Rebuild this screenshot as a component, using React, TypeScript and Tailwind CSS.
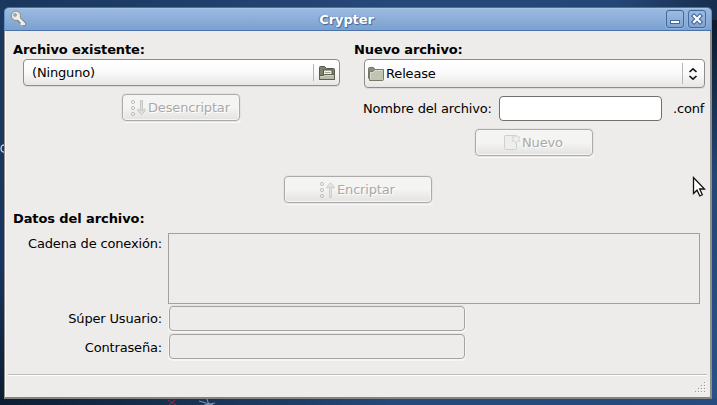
import React from "react";

const etched = "[text-shadow:1px_1px_0_#ffffff]";

function Key() {
  return (
    <svg width="18" height="18" viewBox="0 0 18 18">
      <path d="M8 8.5 L14 14" stroke="#777a75" strokeWidth="4.6" strokeLinecap="round" />
      <circle cx="6" cy="5.8" r="4.7" fill="#e9eae6" stroke="#888a85" />
      <path d="M8 8 L14 14 M12.2 12.4 L11.8 14" stroke="#eeeeec" strokeWidth="2.8" strokeLinecap="round" />
      <circle cx="5" cy="4.9" r="1.5" fill="#8aa9cb" stroke="#a0a39c" strokeWidth="0.8" />
    </svg>
  );
}

function OpenFolder() {
  return (
    <svg width="18" height="16" viewBox="0 0 18 16">
      <path d="M1.5 14.5 V2.5 Q1.5 1.5 2.5 1.5 H6.5 L8.5 3.5 H15.5 Q16.5 3.5 16.5 4.5 V14.5 Z" fill="#7f816d" stroke="#55574a" />
      <rect x="5.5" y="5" width="8.5" height="6" fill="#f4f4f1" stroke="#55574a" />
      <path d="M7 7.5 H12.5" stroke="#a0a09a" />
      <path d="M1.5 14.5 V10.5 H5.5 L6.5 9.5 H16.5 V14.5 Z" fill="#b9bba8" stroke="#5c5e50" />
      <path d="M2.5 11.5 H6 L7 10.5 H15.5" stroke="#d3d5c6" fill="none" />
    </svg>
  );
}

function Folder() {
  return (
    <svg width="18" height="16" viewBox="0 0 18 16">
      <path d="M1.5 12.5 V2.5 Q1.5 1.5 2.5 1.5 H6.5 L8 3.5 H14.5 V7" fill="#8a8c78" stroke="#74766a" />
      <path d="M2.5 14.5 V5.5 H6 L7.5 3.5 H16.5 V13.5 Q16.5 14.5 15.5 14.5 Z" fill="#c2c4b1" stroke="#77796b" />
      <path d="M3.5 13 V6.5 H6.5 L8 4.5 H15.5" stroke="#d8dacd" fill="none" />
    </svg>
  );
}

function Bullets({ up }: { up?: boolean }) {
  return (
    <svg width="17" height="18" viewBox="0 0 17 18" fill="none" stroke="#c0c0be">
      <circle cx="3" cy="3" r="1.6" />
      <circle cx="3" cy="9" r="1.6" />
      <circle cx="3" cy="15" r="1.6" />
      {up ? (
        <path d="M10.5 16.5 V5.8 L8.3 7.4 L7.5 6.2 L11.5 1.8 L15.5 6.2 L14.7 7.4 L12.5 5.8 V16.5 Z" fill="#e4e4e2" stroke="#cdcdcb" />
      ) : (
        <path d="M10.5 1.5 H12.5 V11.8 L14.7 10 L15.5 11.2 L11.5 15.7 L7.5 11.2 L8.3 10 L10.5 11.8 Z" fill="#e2e2e0" stroke="#c4c4c2" />
      )}
    </svg>
  );
}

function NewDocument() {
  return (
    <svg width="17" height="17" viewBox="0 0 17 17">
      <rect x="0.5" y="1.5" width="12" height="14" rx="1" fill="#eeeeed" stroke="#cfcfcd" />
      <path d="M12 1 L13.2 3 L15.7 2.7 L14.7 5 L16 7.3 L13.3 7 L12 9.3 L10.7 7 L8.2 7.3 L9.3 5 L8.2 2.8 L10.8 3 Z" fill="#f0f0ef" stroke="#d4d4d2" strokeWidth="0.9" />
    </svg>
  );
}

function DisabledButton({ className, children }: { className: string; children: React.ReactNode }) {
  return (
    <button disabled className={`flex h-[27px] items-center rounded-[4px] border border-[#acaba9] bg-linear-to-b from-[#f4f4f3] from-50% to-[#e3e2e0] text-[#aaa9a7] shadow-[0_0_0_1px_#e4e3e1,inset_0_0_0_1px_#f5f5f4,1px_2px_0_#f9f9f8] ${etched} ${className}`}>
      {children}
    </button>
  );
}

function DisabledEntry({ className }: { className: string }) {
  return <input disabled className={`block h-[25px] w-[296px] rounded-[4px] border border-[#a4a3a1] bg-[#edeceb] shadow-[0_1px_0_1px_#f6f5f4,0_-1px_0_#e3e2e0] ${className}`} />;
}

function TitleBar() {
  const control = "flex h-[18px] w-[18px] items-center justify-center rounded-[3px] border border-[#426998] bg-linear-to-b from-[#9dbbe2] to-[#80a4d3] shadow-[0_0_0_1px_#94b3dc]";
  return (
    <header className="flex h-[24px] shrink-0 items-center rounded-t-[5px] border border-t-[#4c719f] border-b-[#4b73aa] border-x-[#658fc5] bg-linear-to-b from-[#9cbbe3] to-[#7ca1cf] pl-[5px] pr-[5px] shadow-[inset_0_1px_0_#acc6e8]">
      <Key />
      <h1 className="flex-1 pt-[1px] text-center text-[13px] leading-[20px] font-bold tracking-[-0.1px] text-white [text-shadow:1px_1px_1px_#3c659b,-1px_0_1px_#5d86bb]">
        <span className="mr-[1px]">Crypter</span>
      </h1>
      <div className="flex gap-[4px]">
        <div className={control}>
          <svg width="16" height="16" viewBox="0 0 16 16"><rect x="3.5" y="9.5" width="9" height="3" fill="#fff" stroke="#426998" /></svg>
        </div>
        <div className={control}>
          <svg width="16" height="16" viewBox="0 0 16 16" strokeLinecap="square"><path d="M5 5 L11 11 M11 5 L5 11" stroke="#426998" strokeWidth="4.4" /><path d="M5 5 L11 11 M11 5 L5 11" stroke="#fff" strokeWidth="2.2" /></svg>
        </div>
      </div>
    </header>
  );
}

export default function App() {
  const field = "flex items-center rounded-[4px] border border-[#8e8d8a] bg-linear-to-b from-white via-[#fafafa] via-50% to-[#e6e6e4] shadow-[0_1px_0_#dcdbd9]";
  const heading = "h-[20px] pt-[1px] text-[13px] leading-[20px] font-bold tracking-[-0.1px] whitespace-nowrap";
  return (
    <div className="relative h-[405px] w-[717px] overflow-hidden bg-[linear-gradient(100deg,#19365c_0%,#27497a_50%,#254777_78%,#0d1d31_100%)] pt-[7px] pl-[4px] font-['DejaVu_Sans',sans-serif] text-[13px] tracking-[-0.16px] text-black">
      <div className="absolute inset-y-0 left-0 w-[5px] bg-linear-to-b from-[#1b395e] via-[#193560] via-65% to-[#0d1c30]" />
      <div className="absolute top-[20px] right-0 bottom-0 w-[6px] bg-linear-to-b from-[#0c1b2d] via-[#234674] via-40% to-[#27538a]" />
      <div className="absolute inset-x-0 bottom-0 h-[7px] bg-linear-to-r from-[#0d1e33] via-[#24497a] via-55% to-[#264c80]" />
      <svg className="absolute top-[143px] left-0" width="5" height="11" viewBox="0 0 5 11" fill="none">
        <path d="M5 1.8 Q1 1.5 1 5.5 Q1 9.5 5 9.2" stroke="#dbe2eb" strokeWidth="1.2" />
      </svg>
      <svg className="absolute bottom-0 left-[164px]" width="56" height="7" viewBox="0 0 56 7" fill="none">
        <path d="M4 2 L12 7 M11 2 L5 7" stroke="#9d2d3f" />
        <path d="M35 3 L49 7 M43 1 L45 7 M51 5 L40 7" stroke="#8198b8" />
      </svg>

      <main className="relative flex h-[392px] w-[708px] flex-col">
        <TitleBar />
        <div className="flex flex-1 flex-col border-r-2 border-b-2 border-l border-r-[#8d8c89] border-b-[#85837d] border-l-[#92918e] bg-[#edeceb] shadow-[inset_1px_0_0_#fafafa]">
          <div className="flex h-[145px]">
            <section className="w-[349px] pt-[8px] pl-[8px]">
              <h2 className={heading}>Archivo existente:</h2>
              <div className={`${field} ml-[10px] h-[27px] w-[317px]`}>
                <span className="flex-1 pl-[8px]">(Ninguno)</span>
                <span className="mr-[4px] h-[17px] w-px bg-[#b5b5b2]" />
                <span className="mr-[3px]"><OpenFolder /></span>
              </div>
              <DisabledButton className="mt-[8px] ml-[109px] w-[118px] pl-[7px]">
                <Bullets /><span className="ml-[1px]">Desencriptar</span>
              </DisabledButton>
            </section>
            <section className="w-[356px] pt-[8px]">
              <h2 className={heading}>Nuevo archivo:</h2>
              <div className={`${field} ml-[10px] h-[29px] w-[341px] pl-[2px]`}>
                <Folder />
                <span className="ml-[1px] flex-1">Release</span>
                <span className="h-[21px] w-px bg-[#b5b5b2]" />
                <svg className="mr-[5px] ml-[4px]" width="12" height="14" viewBox="0 0 12 14" fill="none" stroke="#111" strokeWidth="1.6"><path d="M2.5 5 L6 1.8 L9.5 5 M2.5 9 L6 12.2 L9.5 9" /></svg>
              </div>
              <div className="mt-[8px] ml-[9px] flex h-[25px] items-center">
                <label className="w-[136px] whitespace-nowrap">Nombre del archivo:</label>
                <input className="h-[25px] w-[163px] rounded-[4px] border border-[#71706c] bg-white" />
                <span className="ml-[11px]">.conf</span>
              </div>
              <DisabledButton className="mt-[8px] ml-[121px] w-[118px] pl-[28px]">
                <NewDocument /><span className="ml-[1px]">Nuevo</span>
              </DisabledButton>
            </section>
          </div>
          <DisabledButton className="ml-[279px] w-[148px] pl-[34px]">
            <Bullets up /><span className="ml-[1px]">Encriptar</span>
          </DisabledButton>
          <h2 className={`${heading} mt-[5px] ml-[8px]`}>Datos del archivo:</h2>
          <div className="mt-[5px] flex">
            <label className="w-[157px] pt-[1px] text-right leading-[20px]">Cadena de conexión:</label>
            <textarea disabled className="ml-[6px] block h-[71px] w-[532px] resize-none border border-[#a1a09e] bg-[#edeceb]" />
          </div>
          <div className="mt-[2px] flex items-center">
            <label className="w-[157px] text-right">Súper Usuario:</label>
            <DisabledEntry className="ml-[7px]" />
          </div>
          <div className="mt-[3px] flex items-center">
            <label className="w-[157px] pt-[2px] text-right">Contraseña:</label>
            <DisabledEntry className="ml-[7px]" />
          </div>
          <footer className="mt-[15px] mr-[3px] ml-[3px] flex flex-1 items-end justify-end border-t border-[#bdbcb9] shadow-[inset_0_1px_0_#fff]">
            <svg width="12" height="12" className="mb-[3px]" viewBox="0 0 12 12">
              {[0, 1, 2, 3].flatMap((r) => [0, 1, 2, 3].filter((c) => c + r >= 3).map((c) => (
                <g key={`${r}-${c}`}>
                  <rect x={1 + c * 3} y={1 + r * 3} width="1" height="1" fill="#fff" />
                  <rect x={c * 3} y={r * 3} width="1" height="1" fill="#999895" />
                </g>
              )))}
            </svg>
          </footer>
        </div>
        <svg className="absolute top-[169px] left-[688px]" width="14" height="22" viewBox="0 0 14 22">
          <path d="M1.5 1.5 V17.5 L5 14.2 L7.8 20 L10.3 18.8 L7.7 13 H12.5 Z" fill="#fff" stroke="#111" strokeWidth="1.3" />
        </svg>
      </main>
    </div>
  );
}
